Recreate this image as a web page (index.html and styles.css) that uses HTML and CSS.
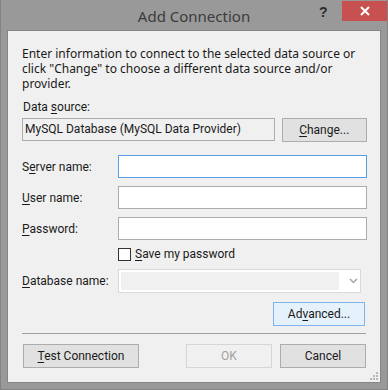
FILE: index.html
```html
<!DOCTYPE html>
<html lang="en">
<head>
  <meta charset="UTF-8">
  <title>Add Connection</title>
  <link rel="stylesheet" href="styles.css">
</head>
<body>

  <div class="window">
    <div class="title-bar">
      <span class="title">Add Connection</span>
      <span class="help">?</span>
      <span class="close">
        <svg width="10" height="10" viewBox="0 0 10 10"><path d="M1 1L9 9M9 1L1 9" stroke="#fff" stroke-width="2"/></svg>
      </span>
    </div>

    <div class="client">
      <p class="intro">Enter information to connect to the selected data source or click "Change" to choose a different data source and/or provider.</p>

      <div class="source-label">Data <u>s</u>ource:</div>
      <div class="source-row">
        <div class="source-box">MySQL Database (MySQL Data Provider)</div>
        <button class="btn change"><u>C</u>hange...</button>
      </div>

      <div class="form">
        <label class="row-label">S<u>e</u>rver name:</label>
        <input type="text" class="field focused">

        <label class="row-label"><u>U</u>ser name:</label>
        <input type="text" class="field">

        <label class="row-label"><u>P</u>assword:</label>
        <input type="password" class="field">

        <span></span>
        <div class="check-row">
          <span class="checkbox"></span>
          <span><u>S</u>ave my password</span>
        </div>

        <label class="row-label db-label"><u>D</u>atabase name:</label>
        <div class="combo">
          <div class="combo-inner"></div>
          <svg class="combo-arrow" width="9" height="6" viewBox="0 0 9 6"><path d="M1 1L4.5 4.5L8 1" fill="none" stroke="#a6a6a6" stroke-width="1.6"/></svg>
        </div>
      </div>

      <div class="advanced-row">
        <button class="btn advanced">Ad<u>v</u>anced...</button>
      </div>

      <div class="separator"></div>

      <div class="button-row">
        <button class="btn test"><u>T</u>est Connection</button>
        <div class="right-buttons">
          <button class="btn disabled">OK</button>
          <button class="btn">Cancel</button>
        </div>
      </div>

      <svg class="grip" width="10" height="10" viewBox="0 0 10 10">
        <rect x="7" y="1" width="2" height="2" fill="#b8b8b8"/>
        <rect x="4" y="4" width="2" height="2" fill="#b8b8b8"/>
        <rect x="7" y="4" width="2" height="2" fill="#b8b8b8"/>
        <rect x="1" y="7" width="2" height="2" fill="#b8b8b8"/>
        <rect x="4" y="7" width="2" height="2" fill="#b8b8b8"/>
        <rect x="7" y="7" width="2" height="2" fill="#b8b8b8"/>
      </svg>
    </div>
  </div>

</body>
</html>
```

FILE: styles.css
```css
body {
  margin: 0;
  padding: 0;
  font-family: Roboto, "Liberation Sans", sans-serif;
  font-size: 12px;
  color: #1a1a1a;
}
.window {
  width: 388px;
  height: 390px;
  box-sizing: border-box;
  background-color: #999999;
  border: 1px solid #838383;
  border-top: none;
  padding: 0 6px 6px 6px;
  display: flex;
  flex-direction: column;
}
.title-bar {
  height: 30px;
  position: relative;
  display: flex;
  justify-content: center;
  align-items: center;
}
.title {
  font-family: "Noto Sans", sans-serif;
  font-size: 15px;
  color: #3c3c3c;
  margin-top: 1px;
}
.help {
  position: absolute;
  left: 312px;
  top: 4px;
  font-family: "Liberation Sans", sans-serif;
  font-weight: bold;
  font-size: 14px;
  color: #2b2b2b;
}
.close {
  position: absolute;
  left: 335px;
  top: 1px;
  width: 45px;
  height: 20px;
  background-color: #c75050;
  display: flex;
  justify-content: center;
  align-items: center;
}
.client {
  flex: 1;
  position: relative;
  background-color: #f0f0f0;
  border: 1px solid #858585;
  padding: 15px 13px 0 14px;
}
u {
  text-decoration: underline;
  text-underline-offset: 2px;
}
.intro {
  font-family: "Noto Sans", sans-serif;
  margin: 0;
  line-height: 15px;
  width: 345px;
}
.source-label {
  margin-top: 9px;
  line-height: 15px;
  padding-left: 1px;
}
.source-row {
  display: flex;
  gap: 7px;
  margin-top: 3px;
}
.source-box {
  width: 250px;
  height: 21px;
  border: 1px solid #acacac;
  line-height: 21px;
  padding-left: 2px;
  box-sizing: content-box;
}
.btn {
  font-family: inherit;
  font-size: 12px;
  color: #1a1a1a;
  background-color: #e1e1e1;
  border: 1px solid #adadad;
  height: 24px;
  width: 86px;
  padding: 0;
  margin: 0;
}
.form {
  display: grid;
  grid-template-columns: 96px 249px;
  row-gap: 8px;
  margin-top: 13px;
  align-items: center;
}
.field {
  box-sizing: border-box;
  width: 249px;
  height: 23px;
  margin: 0;
  border: 1px solid #acacac;
  background-color: #fff;
  outline: none;
}
.focused {
  border-color: #569de5;
}
.check-row {
  display: flex;
  align-items: center;
  gap: 4px;
  margin-top: -1px;
}
.checkbox {
  width: 11px;
  height: 11px;
  border: 1px solid #333;
  background-color: #fff;
}
.combo {
  box-sizing: border-box;
  width: 243px;
  height: 24px;
  border: 1px solid #d9d9d9;
  background-color: #fff;
  display: flex;
  align-items: center;
  padding: 1px 2px;
}
.combo-inner {
  width: 220px;
  height: 18px;
  background-color: #f0f0f0;
}
.combo-arrow {
  margin-left: 10px;
}
.advanced-row {
  display: flex;
  justify-content: flex-end;
  margin-top: 9px;
  padding-right: 2px;
}
.advanced {
  width: 92px;
  background-color: #e5f1fb;
  border-color: #7eb4ea;
}
.separator {
  height: 1px;
  background-color: #a0a0a0;
  margin-top: 7px;
  width: 344px;
}
.button-row {
  display: flex;
  justify-content: space-between;
  margin-top: 10px;
  padding-left: 1px;
  width: 343px;
}
.test {
  width: 116px;
}
.right-buttons {
  display: flex;
  gap: 8px;
}
.disabled {
  color: #a0a0a0;
  background-color: #f0f0f0;
  border-color: #d5d5d5;
}
.grip {
  position: absolute;
  right: 1px;
  bottom: 1px;
}
```
